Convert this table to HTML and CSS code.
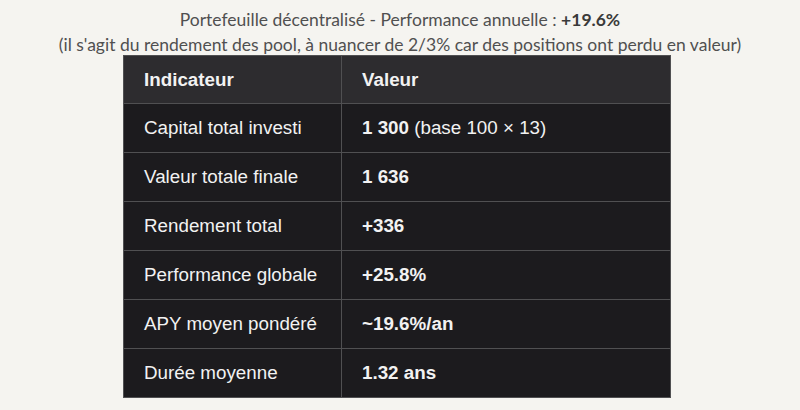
FILE: index.html
```html
<!DOCTYPE html>
<html lang="fr">
<head>
<meta charset="utf-8">
<link rel="stylesheet" href="styles.css">
</head>
<body>
<div class="page">
  <div class="title">
    <div class="line">Portefeuille décentralisé - Performance annuelle : <b>+19.6%</b></div>
    <div class="line">(il s'agit du rendement des pool, à nuancer de 2/3% car des positions ont perdu en valeur)</div>
  </div>
  <table class="perf">
    <thead>
      <tr><th class="c1">Indicateur</th><th>Valeur</th></tr>
    </thead>
    <tbody>
      <tr><td class="c1">Capital total investi</td><td><b>1 300</b> (base 100 × 13)</td></tr>
      <tr><td class="c1">Valeur totale finale</td><td><b>1 636</b></td></tr>
      <tr><td class="c1">Rendement total</td><td><b>+336</b></td></tr>
      <tr><td class="c1">Performance globale</td><td><b>+25.8%</b></td></tr>
      <tr><td class="c1">APY moyen pondéré</td><td><b>~19.6%/an</b></td></tr>
      <tr><td class="c1">Durée moyenne</td><td><b>1.32 ans</b></td></tr>
    </tbody>
  </table>
</div>
</body>
</html>
```

FILE: styles.css
```css
html, body {
  margin: 0;
  padding: 0;
  background: #f5f4f0;
}
.page {
  width: 800px;
  height: 410px;
  display: flex;
  flex-direction: column;
  align-items: center;
  padding-top: 7px;
  box-sizing: border-box;
}
.title {
  font-family: Lato, "Noto Sans", sans-serif;
  font-size: 17.5px;
  color: #505050;
  text-align: center;
  line-height: 25px;
}
.title b {
  color: #3a3a3a;
  font-weight: 700;
}
.perf {
  width: 548px;
  margin-left: -6px;
  margin-top: -2px;
  border-collapse: collapse;
  font-family: "Liberation Sans", Arial, sans-serif;
  font-size: 18.8px;
  color: #f2f2f2;
  background: #1c1b1e;
  border: 1px solid #4a4a4c;
}
.perf th, .perf td {
  text-align: left;
  padding: 0 20px;
  border: 1px solid #505052;
}
.perf th {
  height: 47px;
  background: #2d2c2f;
  font-weight: 700;
}
.perf td {
  height: 48px;
}
.perf .c1 {
  width: 177px;
}
.perf b {
  font-weight: 700;
}
```
